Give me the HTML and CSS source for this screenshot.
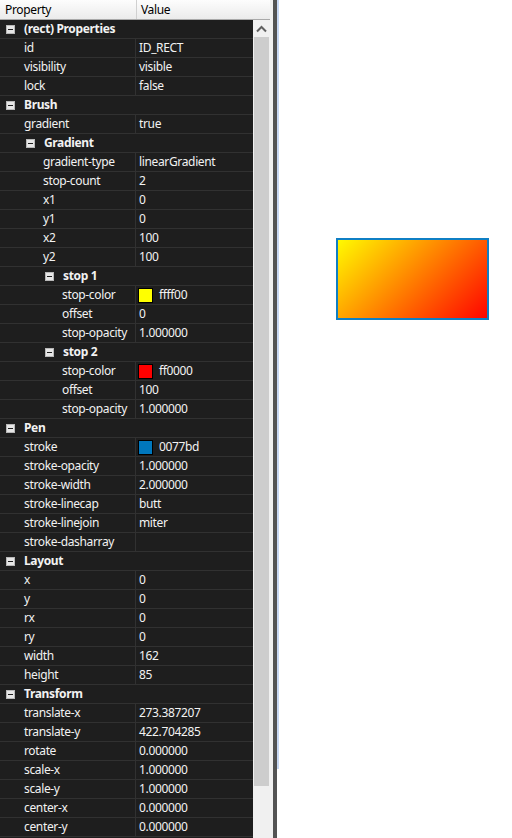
FILE: index.html
```html
<!DOCTYPE html>
<html>
<head>
<meta charset="utf-8">
<link rel="stylesheet" href="styles.css">
</head>
<body>
<div class="app">
  <div class="panel">
    <div class="header">
      <div class="hcell hname">Property</div>
      <div class="hcell hvalue">Value</div>
    </div>
    <div class="body">
      <div class="list">
        <div class="row group l0"><span class="box"></span>(rect) Properties</div>
        <div class="row l0"><div class="name">id</div><div class="val">ID_RECT</div></div>
        <div class="row l0"><div class="name">visibility</div><div class="val">visible</div></div>
        <div class="row l0"><div class="name">lock</div><div class="val">false</div></div>
        <div class="row group l0"><span class="box"></span>Brush</div>
        <div class="row l0"><div class="name">gradient</div><div class="val">true</div></div>
        <div class="row group l1"><span class="box"></span>Gradient</div>
        <div class="row l1"><div class="name">gradient-type</div><div class="val">linearGradient</div></div>
        <div class="row l1"><div class="name">stop-count</div><div class="val">2</div></div>
        <div class="row l1"><div class="name">x1</div><div class="val">0</div></div>
        <div class="row l1"><div class="name">y1</div><div class="val">0</div></div>
        <div class="row l1"><div class="name">x2</div><div class="val">100</div></div>
        <div class="row l1"><div class="name">y2</div><div class="val">100</div></div>
        <div class="row group l2"><span class="box"></span>stop 1</div>
        <div class="row l2"><div class="name">stop-color</div><div class="val"><span class="swatch yellow"></span>ffff00</div></div>
        <div class="row l2"><div class="name">offset</div><div class="val">0</div></div>
        <div class="row l2"><div class="name">stop-opacity</div><div class="val">1.000000</div></div>
        <div class="row group l2"><span class="box"></span>stop 2</div>
        <div class="row l2"><div class="name">stop-color</div><div class="val"><span class="swatch red"></span>ff0000</div></div>
        <div class="row l2"><div class="name">offset</div><div class="val">100</div></div>
        <div class="row l2"><div class="name">stop-opacity</div><div class="val">1.000000</div></div>
        <div class="row group l0"><span class="box"></span>Pen</div>
        <div class="row l0"><div class="name">stroke</div><div class="val"><span class="swatch blue"></span>0077bd</div></div>
        <div class="row l0"><div class="name">stroke-opacity</div><div class="val">1.000000</div></div>
        <div class="row l0"><div class="name">stroke-width</div><div class="val">2.000000</div></div>
        <div class="row l0"><div class="name">stroke-linecap</div><div class="val">butt</div></div>
        <div class="row l0"><div class="name">stroke-linejoin</div><div class="val">miter</div></div>
        <div class="row l0"><div class="name">stroke-dasharray</div><div class="val"></div></div>
        <div class="row group l0"><span class="box"></span>Layout</div>
        <div class="row l0"><div class="name">x</div><div class="val">0</div></div>
        <div class="row l0"><div class="name">y</div><div class="val">0</div></div>
        <div class="row l0"><div class="name">rx</div><div class="val">0</div></div>
        <div class="row l0"><div class="name">ry</div><div class="val">0</div></div>
        <div class="row l0"><div class="name">width</div><div class="val">162</div></div>
        <div class="row l0"><div class="name">height</div><div class="val">85</div></div>
        <div class="row group l0"><span class="box"></span>Transform</div>
        <div class="row l0"><div class="name">translate-x</div><div class="val">273.387207</div></div>
        <div class="row l0"><div class="name">translate-y</div><div class="val">422.704285</div></div>
        <div class="row l0"><div class="name">rotate</div><div class="val">0.000000</div></div>
        <div class="row l0"><div class="name">scale-x</div><div class="val">1.000000</div></div>
        <div class="row l0"><div class="name">scale-y</div><div class="val">1.000000</div></div>
        <div class="row l0"><div class="name">center-x</div><div class="val">0.000000</div></div>
        <div class="row l0"><div class="name">center-y</div><div class="val">0.000000</div></div>
      </div>
      <div class="scrollbar">
        <div class="arrow">
          <svg width="11" height="8" viewBox="0 0 11 8"><path d="M1 6.5 L5.5 2 L10 6.5" fill="none" stroke="#606060" stroke-width="2"/></svg>
        </div>
        <div class="thumb"></div>
      </div>
    </div>
  </div>
  <div class="splitter">
    <div class="gap"></div>
    <div class="dark"></div>
    <div class="edge"><div class="blue"></div></div>
  </div>
  <div class="canvas">
    <svg class="shape" width="153" height="82" viewBox="0 0 153 82">
      <defs>
        <linearGradient id="g" gradientUnits="userSpaceOnUse" x1="0" y1="0" x2="117.5" y2="117.5">
          <stop offset="0" stop-color="#ffff00"/>
          <stop offset="1" stop-color="#ff0000"/>
        </linearGradient>
      </defs>
      <rect x="1" y="1" width="151" height="80" fill="url(#g)" stroke="#0f7fc4" stroke-width="2"/>
    </svg>
  </div>
</div>
</body>
</html>
```

FILE: styles.css
```css
html, body {
  margin: 0;
  padding: 0;
  background: #ffffff;
}
.app {
  display: flex;
  width: 512px;
  height: 838px;
  overflow: hidden;
  font-family: "Noto Sans", "Open Sans", sans-serif;
  font-size: 12px;
  letter-spacing: -0.35px;
}
.panel {
  width: 270px;
  display: flex;
  flex-direction: column;
  flex: none;
}
.header {
  display: flex;
  height: 19px;
  border-bottom: 1px solid #a9a9a9;
  background: linear-gradient(#fdfdfd, #ebebeb);
  color: #000;
}
.hcell {
  line-height: 19px;
  white-space: nowrap;
}
.hname {
  width: 131px;
  padding-left: 5px;
  border-right: 1px solid #d0d0d0;
}
.hvalue {
  padding-left: 4px;
}
.body {
  display: flex;
  flex: 1;
  min-height: 0;
}
.list {
  width: 253px;
  background: #1e1e1e;
  color: #f2f2f2;
  flex: none;
}
.row {
  display: flex;
  height: 18px;
  border-bottom: 1px solid #313131;
  line-height: 18px;
  white-space: nowrap;
}
.name {
  width: 136px;
  box-sizing: border-box;
  border-right: 1px solid #313131;
  padding-left: 24px;
  overflow: hidden;
}
.l1 .name { padding-left: 43px; }
.l2 .name { padding-left: 62px; }
.val {
  display: flex;
  align-items: center;
  padding-left: 3px;
}
.group {
  font-weight: bold;
  align-items: center;
  padding-left: 6px;
}
.group.l1 { padding-left: 26px; }
.group.l2 { padding-left: 45px; }
.box {
  position: relative;
  width: 7px;
  height: 7px;
  border: 1px solid #b8b8b8;
  background: #e6e6e6;
  margin-right: 9px;
  flex: none;
}
.box::after {
  content: "";
  position: absolute;
  left: 1px;
  top: 3px;
  width: 5px;
  height: 1px;
  background: #1e1e1e;
}
.swatch {
  width: 13px;
  height: 13px;
  border: 1px solid #000;
  margin-left: -1px;
  margin-right: 6px;
  flex: none;
}
.yellow { background: #ffff00; }
.red { background: #ff0000; }
.blue { background: #0077bd; }
.scrollbar {
  width: 17px;
  background: #f0f0f0;
  display: flex;
  flex-direction: column;
  align-items: center;
  flex: none;
}
.arrow {
  height: 17px;
  width: 17px;
  display: flex;
  align-items: center;
  justify-content: center;
}
.thumb {
  width: 15px;
  height: 749px;
  background: #cdcdcd;
  margin-top: 0;
}
.splitter {
  display: flex;
  flex: none;
}
.gap {
  width: 3px;
  background: #f0f0f0;
}
.dark {
  width: 4px;
  background: #535353;
}
.edge {
  width: 2px;
  background: #ffffff;
}
.edge .blue {
  height: 769px;
  background: #c7d7f2;
}
.canvas {
  position: relative;
  flex: 1;
  background: #ffffff;
}
.shape {
  position: absolute;
  left: 57px;
  top: 238px;
}
```
